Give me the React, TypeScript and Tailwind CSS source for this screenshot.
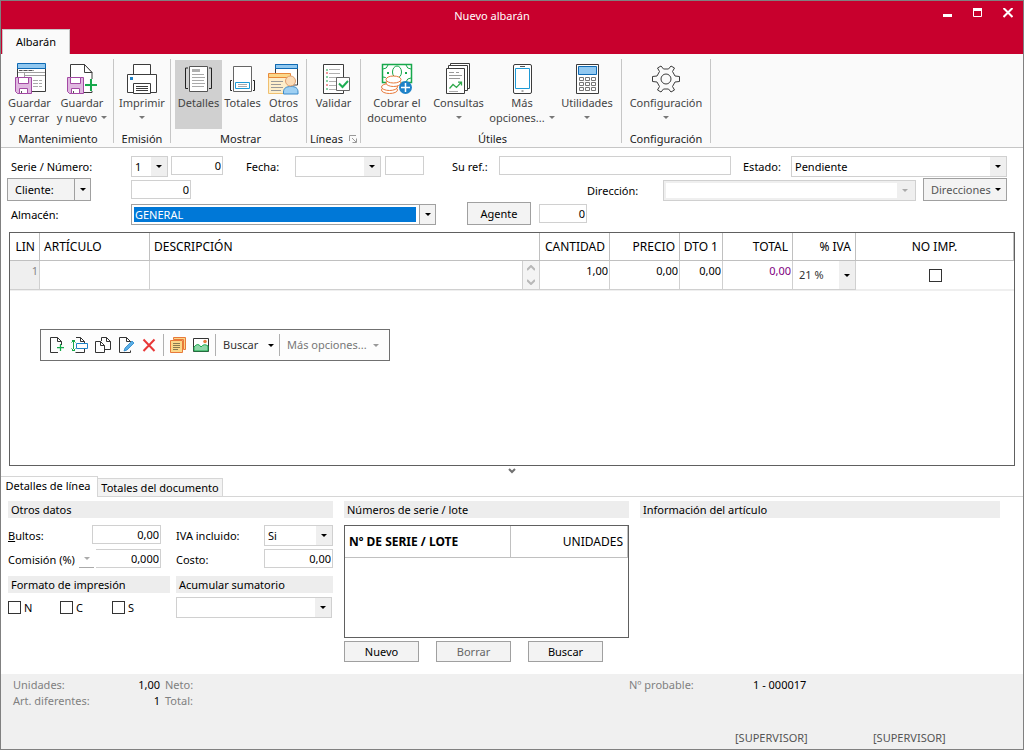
import React from "react";

// small drop-down triangle
const Arrow = ({ className = "text-black" }: { className?: string }) => (
  <svg viewBox="0 0 6 3" className={`h-[3px] w-[6px] shrink-0 ${className}`} fill="currentColor">
    <path d="M0 0h6L3 3z" />
  </svg>
);

const Svg32 = ({ children }: { children: React.ReactNode }) => (
  <svg viewBox="0 0 32 32" className="h-8 w-8 shrink-0" fill="none" stroke="#3c3c3c" strokeWidth="1">
    {children}
  </svg>
);

// floppy disk shared by the two save icons
const Disk = () => (
  <g stroke="#a349a4">
    <path d="M1.5 14.5h16v16h-14l-2-2z" fill="#e0b8e0" />
    <path d="M4.500 14.500h10v6h-10z" fill="#fff" />
    <path d="M5.500 25.500h8v5h-8z" fill="#fff" />
    <path d="M7.500 28v2" stroke="#555" />
  </g>
);

const SaveCloseIcon = () => (
  <Svg32>
    <path d="M3.500 5v23.500h28V5" fill="#fff" />
    <path d="M3.500 .5h28v5h-28z" fill="#91c8f0" stroke="#0f6ab4" />
    <path d="M5 7.500h15M4 9.500h27M10.500 9.500v5M10 12.500h21" stroke="#a0a0a0" />
    <path d="M5 7.500h3m2 0h3m2 0h3" stroke="#555" />
    <path d="M19 17.500h10M19 20.500h10M19 23.500h10" stroke="#aaa" strokeDasharray="5 1 3 1" />
    <Disk />
  </Svg32>
);

const SaveNewIcon = () => (
  <Svg32>
    <path d="M4.500 14V1.500h14l7.500 8v20H17" fill="#fff" />
    <path d="M18.500 1.500v8H26z" fill="#fff" />
    <Disk />
    <path d="M25 16v12M19 22h12" stroke="#fafafa" strokeWidth="4" />
    <path d="M25 16v12M19 22h12" stroke="#17a84b" strokeWidth="2" />
  </Svg32>
);

const PrinterIcon = () => (
  <Svg32>
    <path d="M7.500 11V1.500h17V11" fill="#fff" />
    <path d="M1.500 11.500h29v18h-29z" fill="#fff" />
    <path d="M7.500 20.500h17v10h-17z" fill="#fff" />
    <path d="M10 23.500h12M10 25.500h12M10 27.500h12" />
    <path d="M4 14h3v3H4z" fill="#1e82c8" stroke="none" />
  </Svg32>
);

const DetailsIcon = () => (
  <Svg32>
    <path d="M6.500 3.500h18v25h-18z" fill="#fff" stroke="#555" />
    <path d="M9 6h8v3H9z" fill="#b0b0b0" stroke="none" />
    <path d="M9 11.500h12M9 14.500h13M9 17.500h12M9 20.500h13M9 23.500h12" stroke="#aaa" />
    <path d="M5 5H2.500v20.500H5M26 5h2.500v20.500H26" stroke="#222" />
  </Svg32>
);

const TotalsIcon = () => (
  <Svg32>
    <path d="M6.500 3.500h18v25h-18z" fill="#fff" stroke="#666" />
    <path d="M8.500 19.500h14v6h-14z" fill="#fff" stroke="#1e9ad6" />
    <path d="M11 21.500h9M11 23.500h9" stroke="#aaa" />
    <path d="M5 17.500H3.500v10H5M26 17.500h1.500v10H26" stroke="#222" />
  </Svg32>
);

const OtherDataIcon = () => (
  <Svg32>
    <path d="M7.500 1.500h22V22h-22z" fill="#fff" />
    <path d="M7.500 1.500h22v4h-22z" fill="#91c8f0" stroke="#0f6ab4" />
    <path d="M.5 14v16.500h22V14" fill="#fdeecb" stroke="#f0c070" />
    <path d="M.5 10.500h22v4H.5z" fill="#fbd789" stroke="#e8893a" />
    <path d="M3 18.500h12M3 21.500h10M3 24.500h12M3 27.500h10" stroke="#999" />
    <path d="M15.500 31v-2c0-4 3-5.500 7.500-5.500s7 1.500 7 5.500v2z" fill="#9fd0f3" stroke="#3b8ac9" />
    <circle cx="22.500" cy="18" r="5" fill="#fbdcb8" stroke="#e0a070" />
  </Svg32>
);

const ValidateIcon = () => (
  <Svg32>
    <path d="M5.500 1.500h20v29h-20z" fill="#fff" />
    <path d="M11 6.500h11M11 10.500h11M11 14.500h8M11 18.500h7M11 22.500h7M11 26.500h11" stroke="#b0b0b0" />
    <path d="M9 6v2M9 13v2M9 17v2M9 25v2" stroke="#17a84b" />
    <path d="M9 9v2M9 21v2" stroke="#d33" />
    <path d="M18.500 14.500h13v13h-13z" fill="#fff" stroke="#666" />
    <path d="M21 20.500l3.500 3.500 5.500-6" stroke="#1fae54" strokeWidth="2" />
  </Svg32>
);

const CashIcon = () => (
  <Svg32>
    <path d="M1.500 1.500h29v18h-29z" fill="#fff" stroke="#17a84b" strokeWidth="1.500" />
    <path d="M2 6q4 0 5-4M30 6q-4 0-5-4M30 15q-4 0-5 4M2 14q3 0 4 2" stroke="#17a84b" />
    <ellipse cx="16" cy="9" rx="4.500" ry="6" stroke="#17a84b" />
    <path d="M6 10h2M24 10h2" stroke="#17a84b" strokeWidth="2" />
    <g fill="#fff" stroke="#e8793a">
      <path d="M5.500 16v11h15V16z" stroke="none" />
      <ellipse cx="8.500" cy="27" rx="8" ry="3.500" />
      <ellipse cx="8.500" cy="24" rx="8" ry="3.500" />
      <ellipse cx="12.500" cy="20" rx="7.500" ry="3.500" />
      <ellipse cx="12.500" cy="16.500" rx="7.500" ry="3.500" />
    </g>
    <circle cx="24.500" cy="24.500" r="6.500" fill="#1e82c8" stroke="none" />
    <path d="M24.500 20v9M20 24.500h9" stroke="#fff" strokeWidth="1.500" />
  </Svg32>
);

const QueriesIcon = () => (
  <Svg32>
    <path d="M7.500 .5h19v25h-19z" fill="#fff" />
    <path d="M5.500 2.500h19v25h-19z" fill="#fff" />
    <path d="M3.500 5.500h18v25h-18z" fill="#fff" />
    <path d="M6 9.500h5m2 0h3M6 12.500h13M6 15.500h11" stroke="#999" />
    <path d="M6.500 25.500l3.500-4 3.500 3 5-5.500M15 19h3.500v3.500" stroke="#2fa84b" strokeWidth="1.250" />
    <path d="M6 28.500h9" stroke="#aaa" />
  </Svg32>
);

const PhoneIcon = () => (
  <Svg32>
    <rect x="7.500" y="1.500" width="18" height="29" rx="1.500" fill="#fff" />
    <path d="M9.500 5.500h14v20h-14z" fill="#fff" stroke="#1e9ad6" />
    <path d="M14 3.500h5M15.500 28h2" stroke="#555" />
  </Svg32>
);

const CalculatorIcon = () => (
  <Svg32>
    <path d="M5.500 1.500h22v29h-22z" fill="#fff" />
    <path d="M7.500 3.500h18v8h-18z" fill="#91c8f0" stroke="#0f6ab4" />
    <path
      d="M8.500 14.500h4v3h-4zM14.500 14.500h4v3h-4zM20.500 14.500h4v3h-4zM8.500 19.500h4v3h-4zM14.500 19.500h4v3h-4zM20.500 19.500h4v3h-4zM8.500 24.500h4v3h-4zM14.500 24.500h4v3h-4zM20.500 24.500h4v3h-4z"
      stroke="#777"
    />
  </Svg32>
);

const GearIcon = () => (
  <Svg32>
    <circle cx="16" cy="16" r="5" />
    <path
      d="M2.500 13.500l4.500-.5 2.500-4.500-2-3.500 3.500-2 2.500 3h5l2.500-3 3.500 2-2 3.500 2.500 4.500 4.500.5v5l-4.500.5-2.500 4.500 2 3.500-3.500 2-2.500-3h-5l-2.500 3-3.500-2 2-3.500L7 19l-4.500-.5z"
      strokeLinejoin="round"
    />
  </Svg32>
);

type RibbonButtonProps = {
  icon: React.ReactNode;
  lines: string[];
  width: string;
  menu?: boolean;
  active?: boolean;
};

const RibbonButton = ({ icon, lines, width, menu, active }: RibbonButtonProps) => (
  <button
    type="button"
    className={`flex h-[69px] shrink-0 flex-col items-center whitespace-nowrap pt-[3px] text-[#444] ${width} ${active ? "bg-[#d0d0d0]" : ""}`}
  >
    {icon}
    <span className="leading-[15px]">{lines[0]}</span>
    <span className="flex h-[15px] items-center gap-1 leading-[15px]">
      {lines[1]}
      {menu && <Arrow className="text-[#777]" />}
    </span>
  </button>
);

const RibbonGroup = ({
  title,
  width,
  launcher,
  children,
}: {
  title: string;
  width: string;
  launcher?: boolean;
  children: React.ReactNode;
}) => (
  <>
    <div className={`flex shrink-0 flex-col pt-px ${width}`}>
      <div className="flex">{children}</div>
      <div className="mt-[2px] flex items-center justify-center gap-[6px] leading-4 text-[#222]">
        {title}
        {launcher && (
          <svg viewBox="0 0 8 8" className="h-2 w-2" fill="none" stroke="#999">
            <path d="M.5 6V.5H7M3 3l4 4M7.500 3.500v4h-4" />
          </svg>
        )}
      </div>
    </div>
    <span className="h-[84px] w-px shrink-0 bg-[#c6c6c6]" />
  </>
);

type ComboProps = {
  id: string;
  value?: string;
  className: string;
};

const Combo = ({ id, value = "", className }: ComboProps) => (
  <div className={`flex h-[21px] border border-[#d0d0d0] bg-white ${className}`}>
    <select id={id} aria-label={id} className="min-w-0 flex-1 appearance-none pl-[3px] outline-none">
      <option>{value}</option>
    </select>
    <span className="pointer-events-none flex w-4 shrink-0 items-center justify-center bg-[#efefef]">
      <Arrow />
    </span>
  </div>
);

const Field = ({ id, value = "", className }: ComboProps) => (
  <input
    id={id}
    aria-label={id}
    defaultValue={value}
    className={`h-[19px] min-w-0 border border-[#d0d0d0] bg-white px-px text-right outline-none ${className}`}
  />
);

const Label = ({ htmlFor, className, children }: { htmlFor: string; className: string; children: React.ReactNode }) => (
  <label htmlFor={htmlFor} className={`whitespace-nowrap pt-[3px] ${className}`}>
    {children}
  </label>
);

const Check = ({ label }: { label: string }) => (
  <label className="flex w-[52px] items-center gap-[3px]">
    <input type="checkbox" className="h-[13px] w-[13px] appearance-none border border-[#333] bg-white" />
    {label}
  </label>
);

const PanelTitle = ({ children }: { children: React.ReactNode }) => (
  <h2 className="h-[17px] bg-[#ededed] pl-[3px] leading-[17px]">{children}</h2>
);

const pushButton = "border border-[#a0a0a0] bg-[#f3f3f3] text-center";

const columns = [
  { name: "LIN", width: "w-[30px]", align: "text-right pr-1" },
  { name: "ARTÍCULO", width: "w-[110px]", align: "text-left pl-1" },
  { name: "DESCRIPCIÓN", width: "", align: "text-left pl-1" },
  { name: "CANTIDAD", width: "w-[70px]", align: "text-right pr-1" },
  { name: "PRECIO", width: "w-[70px]", align: "text-right pr-1" },
  { name: "DTO 1", width: "w-[43px]", align: "text-right pr-1" },
  { name: "TOTAL", width: "w-[70px]", align: "text-right pr-1" },
  { name: "% IVA", width: "w-[63px]", align: "text-right pr-1" },
  { name: "NO IMP.", width: "w-[158px]", align: "text-center" },
];

const cell = "border-b border-r border-[#d0d0d0] p-0 align-top";
const cellInput = "block h-[18px] w-full pr-px text-right outline-none";

const LinesTable = () => (
  <table className="w-full table-fixed border-separate border-spacing-0 border-b border-[#efefef]">
    <thead>
      <tr className="h-7 text-[12px]">
        {columns.map((c) => (
          <th
            key={c.name}
            className={`whitespace-nowrap border-b border-r border-[#c0c0c0] p-0 font-normal ${c.width} ${c.align}`}
          >
            {c.name}
          </th>
        ))}
      </tr>
    </thead>
    <tbody>
      <tr className="h-[29px]">
        <td className={`${cell} bg-[#efefef] text-right text-[#888]`}>
          <div className="pr-px pt-[2px]">1</div>
        </td>
        <td className={cell}>
          <input aria-label="Artículo" className={cellInput} />
        </td>
        <td className={cell}>
          <div className="flex h-7">
            <input aria-label="Descripción" className="min-w-0 flex-1 border-r border-[#d0d0d0] outline-none" />
            <span className="flex w-4 flex-col items-center justify-between bg-[#f4f4f4] py-1">
              <svg viewBox="0 0 8 6" className="h-[6px] w-2" fill="none" stroke="#b8b8b8" strokeWidth="2">
                <path d="M0 5l4-4 4 4" />
              </svg>
              <svg viewBox="0 0 8 6" className="h-[6px] w-2" fill="none" stroke="#b8b8b8" strokeWidth="2">
                <path d="M0 1l4 4 4-4" />
              </svg>
            </span>
          </div>
        </td>
        <td className={cell}>
          <input aria-label="Cantidad" defaultValue="1,00" className={cellInput} />
        </td>
        <td className={cell}>
          <input aria-label="Precio" defaultValue="0,00" className={cellInput} />
        </td>
        <td className={cell}>
          <input aria-label="Dto 1" defaultValue="0,00" className={cellInput} />
        </td>
        <td className={cell}>
          <input aria-label="Total" defaultValue="0,00" className={`${cellInput} text-[#800080]`} />
        </td>
        <td className={cell}>
          <div className="flex h-7">
            <select aria-label="% IVA" className="min-w-0 flex-1 appearance-none pl-[6px] text-[#333] outline-none">
              <option>21 %</option>
            </select>
            <span className="pointer-events-none flex w-4 items-center justify-center bg-[#efefef]">
              <Arrow />
            </span>
          </div>
        </td>
        <td className="border-b border-[#efefef] p-0">
          <input
            type="checkbox"
            aria-label="No imp."
            className="mx-auto block h-[13px] w-[13px] appearance-none border border-[#333] bg-white"
          />
        </td>
      </tr>
    </tbody>
  </table>
);

const ToolIcon = ({ label, children }: { label: string; children: React.ReactNode }) => (
  <button type="button" aria-label={label} className="flex w-[23px] justify-center">
    <svg viewBox="0 0 18 18" className="h-[18px] w-[18px] shrink-0" fill="none" stroke="#333">
      {children}
    </svg>
  </button>
);

const LineToolbar = () => (
  <div className="ml-[30px] mt-[38px] flex h-8 w-[350px] items-center border border-[#707070] bg-[#fdfdfd] pl-1 text-[#333]">
    <ToolIcon label="Nueva línea">
      <path d="M13.500 9V5.500l-4-4h-7v15H10" />
      <path d="M9.500 1.500v4h4" />
      <path d="M12.500 8v7M9 11.500h7" stroke="#17a84b" strokeWidth="1.250" />
    </ToolIcon>
    <ToolIcon label="Insertar línea">
      <path d="M5 1.500h4.500l4 4V7M9.500 1.500v4h4M4.500 16.500h9V13" />
      <path d="M5.500 7.500h11v5h-11z" stroke="#1e82c8" />
      <path d="M2.500 5v8M.5 6.500l2-2 2 2M.5 12.500l2 2 2-2M1 4.500h3M1 14.500h3" stroke="#17a84b" />
    </ToolIcon>
    <ToolIcon label="Copiar línea">
      <path d="M7.500 5V1.500h5l4 4v8H11" />
      <path d="M12.500 1.500v4h4M1.500 5.500h5l4 4v7h-9zM6.500 5.500v4h4" />
    </ToolIcon>
    <ToolIcon label="Modificar línea">
      <path d="M13.500 6V5.500l-4-4h-7v15h11v-2" />
      <path d="M9.500 1.500v4h4" />
      <path d="M7 15l1-3 7-7 2 2-7 7z" fill="#5aaee6" stroke="#1e82c8" strokeWidth=".75" />
    </ToolIcon>
    <ToolIcon label="Eliminar línea">
      <path d="M3.500 3.500l11 11.500M14.500 3.500l-11 11.500" stroke="#e83838" strokeWidth="2" />
    </ToolIcon>
    <span className="ml-[3px] mr-[2px] h-[22px] w-px bg-[#b0b0b0]" />
    <ToolIcon label="Notas">
      <path d="M4.500 1.500h12v12h-2v-10h-10z" fill="#fbd789" stroke="#e8793a" />
      <path d="M1.500 4.500h12v12h-12z" fill="#fbd789" stroke="#e8793a" />
      <path d="M4 7.500h7M4 9.500h7M4 11.500h7M4 13.500h5" stroke="#8a7a50" />
    </ToolIcon>
    <ToolIcon label="Imagen">
      <path d="M1.500 2.500h15v13h-15z" fill="#fff" />
      <path d="M2 11q4-5 7 0 3-4 7-1v5H2z" fill="#8fd6a8" stroke="#17a84b" />
      <circle cx="13" cy="5.500" r="1.750" fill="#e8793a" stroke="none" />
    </ToolIcon>
    <span className="ml-[3px] mr-[2px] h-[22px] w-px bg-[#b0b0b0]" />
    <button type="button" className="flex w-[56px] items-center justify-between pl-[5px]">
      Buscar <Arrow />
    </button>
    <span className="ml-[5px] mr-[7px] h-[22px] w-px bg-[#b0b0b0]" />
    <button type="button" className="flex items-center gap-[6px] whitespace-nowrap text-[#777]">
      Más opciones... <Arrow className="text-[#999]" />
    </button>
  </div>
);

export default function App() {
  return (
    <div className="flex min-h-screen flex-col border border-[#808080] bg-white font-['Noto_Sans','Open_Sans',sans-serif] text-[11px] leading-4 text-black">
      {/* title bar */}
      <header className="flex h-[53px] flex-col bg-[#c8002d] text-white">
        <div className="flex h-[29px] items-center">
          <h1 className="flex-1 pl-10 pt-[2px] text-center">Nuevo albarán</h1>
          <div className="flex items-center gap-5 pb-[5px] pr-[10px]">
            <button type="button" aria-label="Minimizar">
              <svg viewBox="0 0 10 10" className="h-[10px] w-[10px]" fill="currentColor">
                <path d="M0 6h9v3H0z" />
              </svg>
            </button>
            <button type="button" aria-label="Maximizar">
              <svg viewBox="0 0 10 10" className="h-[10px] w-[10px]" fill="none" stroke="currentColor">
                <path d="M.5 .5h8v8h-8z" />
                <path d="M0 1.500h9" strokeWidth="3" />
              </svg>
            </button>
            <button type="button" aria-label="Cerrar">
              <svg viewBox="0 0 10 10" className="h-[10px] w-[10px]" fill="none" stroke="currentColor" strokeWidth="2">
                <path d="M.5 0l9 9M9.500 0l-9 9" />
              </svg>
            </button>
          </div>
        </div>
        <button
          type="button"
          className="ml-px h-[25px] w-[68px] shrink-0 border border-b-0 border-[#c6c6c6] bg-[#fafafa] text-black"
        >
          Albarán
        </button>
      </header>

      {/* ribbon */}
      <div className="flex h-[94px] border-b border-t border-b-[#c6c6c6] border-t-[#fafafa] bg-[#fafafa] pt-1">
        <RibbonGroup title="Mantenimiento" width="w-[112px] pl-[2px]">
          <RibbonButton icon={<SaveCloseIcon />} lines={["Guardar", "y cerrar"]} width="w-[53px]" />
          <RibbonButton icon={<SaveNewIcon />} lines={["Guardar", "y nuevo"]} width="w-[52px]" menu />
        </RibbonGroup>
        <RibbonGroup title="Emisión" width="w-[56px]">
          <RibbonButton icon={<PrinterIcon />} lines={["Imprimir"]} width="w-full" menu />
        </RibbonGroup>
        <RibbonGroup title="Mostrar" width="w-[135px] pl-1">
          <RibbonButton icon={<DetailsIcon />} lines={["Detalles"]} width="w-[47px]" active />
          <RibbonButton icon={<TotalsIcon />} lines={["Totales"]} width="w-[41px]" />
          <RibbonButton icon={<OtherDataIcon />} lines={["Otros", "datos"]} width="w-[41px]" />
        </RibbonGroup>
        <RibbonGroup title="Líneas" width="w-[53px]" launcher>
          <RibbonButton icon={<ValidateIcon />} lines={["Validar"]} width="w-full" />
        </RibbonGroup>
        <RibbonGroup title="Útiles" width="w-[260px] pl-[3px]">
          <RibbonButton icon={<CashIcon />} lines={["Cobrar el", "documento"]} width="w-[66px]" />
          <RibbonButton icon={<QueriesIcon />} lines={["Consultas"]} width="w-[57px]" menu />
          <RibbonButton icon={<PhoneIcon />} lines={["Más", "opciones..."]} width="w-[70px]" menu />
          <RibbonButton icon={<CalculatorIcon />} lines={["Utilidades"]} width="w-[60px]" menu />
        </RibbonGroup>
        <RibbonGroup title="Configuración" width="w-[88px]">
          <RibbonButton icon={<GearIcon />} lines={["Configuración"]} width="w-full" menu />
        </RibbonGroup>
      </div>

      {/* document header */}
      <div className="flex flex-col pl-[10px] pr-4 pt-2">
        <div className="flex h-6 items-start">
          <Label htmlFor="serie" className="w-[120px]">Serie / Número:</Label>
          <Combo id="serie" value="1" className="w-[37px]" />
          <Field id="numero" value="0" className="ml-[3px] w-[52px]" />
          <Label htmlFor="fecha" className="ml-[23px] w-[49px]">Fecha:</Label>
          <Combo id="fecha" className="w-[86px]" />
          <Field id="hora" className="ml-1 w-[39px]" />
          <Label htmlFor="ref" className="ml-7 w-[47px]">Su ref.:</Label>
          <Field id="ref" className="flex-1" />
          <Label htmlFor="estado" className="ml-3 w-12">Estado:</Label>
          <Combo id="estado" value="Pendiente" className="w-[216px]" />
        </div>
        <div className="flex h-6 items-start">
          <div className={`-ml-1 -mt-[2px] mr-10 flex h-[23px] w-[84px] ${pushButton}`}>
            <button type="button" className="flex-1 border-r border-[#a0a0a0] pl-[7px] text-left">
              Cliente:
            </button>
            <button type="button" aria-label="Opciones de cliente" className="flex w-[15px] items-center justify-center">
              <Arrow />
            </button>
          </div>
          <Field id="cliente" value="0" className="w-[60px]" />
          <Label htmlFor="direccion" className="ml-auto w-[76px]">Dirección:</Label>
          <div className="flex h-[21px] w-[253px] border border-[#d0d0d0] bg-[#efefef] p-[2px]">
            <select id="direccion" disabled className="flex-1 appearance-none bg-white" />
            <span className="flex w-4 items-center justify-center">
              <Arrow className="text-[#aaa]" />
            </span>
          </div>
          <button
            type="button"
            className={`-mt-[2px] ml-[7px] flex h-[23px] w-[84px] items-center justify-between px-[5px] text-[#555] ${pushButton}`}
          >
            <span className="pl-[2px]">Direcciones</span>
            <Arrow />
          </button>
        </div>
        <div className="flex h-6 items-start">
          <Label htmlFor="almacen" className="w-[120px]">Almacén:</Label>
          <div className="flex h-[21px] w-[305px] border border-[#a0a0a0]">
            <select
              id="almacen"
              className="m-[2px] mr-[3px] flex-1 appearance-none bg-[#0078d7] pl-px leading-[15px] text-white outline-none"
            >
              <option>GENERAL</option>
            </select>
            <span className="pointer-events-none flex w-4 items-center justify-center border-l border-[#a0a0a0] bg-[#f3f3f3]">
              <Arrow />
            </span>
          </div>
          <button type="button" className={`-mt-[2px] ml-[31px] h-[23px] w-16 ${pushButton}`}>Agente</button>
          <Field id="agente" value="0" className="ml-2 w-12" />
        </div>
      </div>

      {/* lines */}
      <section className="mx-2 mt-1 flex min-h-[234px] flex-1 flex-col border border-[#606060]">
        <LinesTable />
        <LineToolbar />
      </section>

      <button type="button" aria-label="Plegar" className="flex h-[10px] items-center justify-center">
        <svg viewBox="0 0 8 6" className="h-[6px] w-2" fill="none" stroke="#707070" strokeWidth="2">
          <path d="M1 1l3 3 3-3" />
        </svg>
      </button>

      {/* detail tabs */}
      <nav className="flex h-[21px] items-end border-b border-[#d6d6d6]">
        <button
          type="button"
          className="-mb-px h-[21px] w-[97px] whitespace-nowrap border-r border-t border-[#d6d6d6] bg-white pb-[2px] pr-[2px] text-center"
        >
          Detalles de línea
        </button>
        <button
          type="button"
          className="h-[18px] w-[125px] whitespace-nowrap border-r border-t border-[#d6d6d6] bg-[#f3f3f3]"
        >
          Totales del documento
        </button>
      </nav>

      <div className="flex gap-[11px] pb-3 pl-[7px] pr-[23px] pt-1">
        <section className="w-[325px] shrink-0">
          <PanelTitle>Otros datos</PanelTitle>
          <div className="mt-[7px] flex h-6 items-start">
            <Label htmlFor="bultos" className="w-[84px]">
              <u>B</u>ultos:
            </Label>
            <Field id="bultos" value="0,00" className="w-[69px]" />
            <Label htmlFor="iva" className="ml-[15px] w-[88px]">IVA incluido:</Label>
            <Combo id="iva" value="Si" className="w-[69px]" />
          </div>
          <div className="flex h-6 items-start">
            <Label htmlFor="comision" className="w-[71px]">Comisión (%)</Label>
            <button
              type="button"
              aria-label="Tipo de comisión"
              className="flex h-[19px] w-[15px] items-center justify-center border-b border-[#aaa]"
            >
              <Arrow className="text-[#aaa]" />
            </button>
            <Field id="comision" value="0,000" className="ml-[2px] w-[65px] border-l-0" />
            <Label htmlFor="costo" className="ml-[15px] w-[88px]">Costo:</Label>
            <Field id="costo" value="0,00" className="w-[69px]" />
          </div>
          <div className="mt-[3px] flex gap-[6px]">
            <div className="w-[162px]">
              <PanelTitle>Formato de impresión</PanelTitle>
              <div className="mt-1 flex h-[21px] items-center">
                <Check label="N" />
                <Check label="C" />
                <Check label="S" />
              </div>
            </div>
            <div className="flex-1">
              <PanelTitle>Acumular sumatorio</PanelTitle>
              <Combo id="acumular" className="mt-1 w-[156px]" />
            </div>
          </div>
        </section>

        <section className="w-[285px] shrink-0">
          <PanelTitle>Números de serie / lote</PanelTitle>
          <div className="mt-[7px] h-[113px] border border-[#606060]">
            <table className="w-full table-fixed border-separate border-spacing-0 text-[12px]">
              <thead>
                <tr className="h-8">
                  <th className="w-[166px] border-b border-r border-[#c0c0c0] p-0 pl-1 text-left font-bold">
                    Nº DE SERIE / LOTE
                  </th>
                  <th className="border-b border-r border-[#c0c0c0] p-0 pr-1 text-right font-normal">UNIDADES</th>
                </tr>
              </thead>
            </table>
          </div>
          <div className="mt-[3px] flex gap-[17px]">
            <button type="button" className={`h-[21px] w-[75px] ${pushButton}`}>Nuevo</button>
            <button type="button" className={`h-[21px] w-[75px] text-[#666] ${pushButton}`}>Borrar</button>
            <button type="button" className={`h-[21px] w-[75px] ${pushButton}`}>Buscar</button>
          </div>
        </section>

        <section className="flex-1">
          <PanelTitle>Información del artículo</PanelTitle>
        </section>
      </div>

      {/* status bar */}
      <footer className="flex h-[75px] flex-col bg-[#f0f0f0] pl-3 pt-[3px] text-[#808080]">
        <div className="flex">
          <span className="w-[87px] whitespace-nowrap">Unidades:</span>
          <span className="w-[60px] text-right text-black">1,00</span>
          <span className="ml-[5px]">Neto:</span>
          <span className="ml-auto w-[124px]">Nº probable:</span>
          <span className="w-[270px] text-black">1 - 000017</span>
        </div>
        <div className="flex">
          <span className="w-[87px] whitespace-nowrap">Art. diferentes:</span>
          <span className="w-[60px] text-right text-black">1</span>
          <span className="ml-[5px]">Total:</span>
        </div>
        <div className="mt-auto flex justify-end pb-[3px] text-[#555]">
          <span className="w-[138px]">[SUPERVISOR]</span>
          <span className="w-[150px]">[SUPERVISOR]</span>
        </div>
      </footer>
    </div>
  );
}
